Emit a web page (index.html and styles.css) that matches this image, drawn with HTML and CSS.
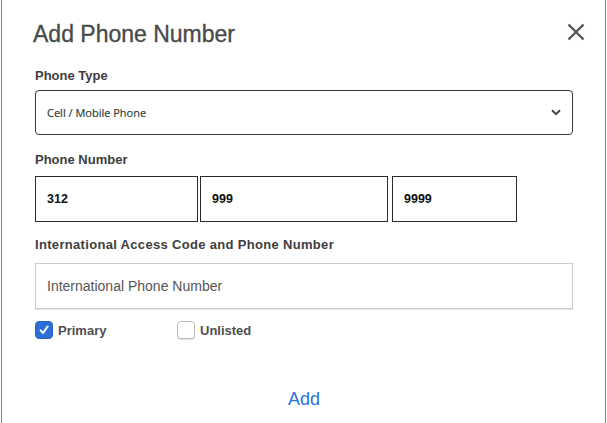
FILE: index.html
```html
<!DOCTYPE html>
<html>
<head>
<meta charset="utf-8">
<link rel="stylesheet" href="styles.css">
</head>
<body>
<div class="modal">
  <div class="header">
    <h1 class="title">Add Phone Number</h1>
    <button class="close" aria-label="Close">
      <svg width="18" height="18" viewBox="0 0 18 18"><path d="M1.5 1.5L16.5 16.5M16.5 1.5L1.5 16.5" stroke="#555" stroke-width="2.4" stroke-linecap="butt" fill="none"/></svg>
    </button>
  </div>

  <div class="label label-type">Phone Type</div>
  <div class="select">
    <span class="select-text">Cell / Mobile Phone</span>
    <svg class="chev" width="10" height="7" viewBox="0 0 10 7"><path d="M1 1.2L5 5.2L9 1.2" stroke="#444" stroke-width="2" fill="none"/></svg>
  </div>

  <div class="label label-number">Phone Number</div>
  <div class="phone-row">
    <div class="field area">312</div>
    <div class="field prefix">999</div>
    <div class="field line">9999</div>
  </div>

  <div class="label label-intl">International Access Code and Phone Number</div>
  <div class="intl">International Phone Number</div>

  <div class="checks">
    <label class="check">
      <span class="box box-on">
        <svg width="12" height="12" viewBox="0 0 12 12"><path d="M2.6 6.4L5 9L9.6 2.6" stroke="#fff" stroke-width="2" fill="none" stroke-linecap="round" stroke-linejoin="round"/></svg>
      </span>
      <span class="check-label">Primary</span>
    </label>
    <label class="check">
      <span class="box box-off"></span>
      <span class="check-label">Unlisted</span>
    </label>
  </div>

  <div class="footer"><a class="add">Add</a></div>
</div>
</body>
</html>
```

FILE: styles.css
```css
html, body {
  margin: 0;
  padding: 0;
  background: #fff;
}
body {
  font-family: "Liberation Sans", Arial, sans-serif;
}
.modal {
  box-sizing: border-box;
  width: 605px;
  height: 423px;
  margin-left: 1px;
  border-left: 1px solid #858585;
  border-right: 1px solid #858585;
  padding: 20px 32px 0 33px;
  background: #fff;
}
.header {
  display: flex;
  justify-content: space-between;
  align-items: flex-start;
}
.title {
  margin: 0 0 0 -2px;
  font-size: 23px;
  line-height: 28px;
  font-weight: normal;
  color: #4a4a4a;
  -webkit-text-stroke: 0.35px #4a4a4a;
}
.close {
  border: 0;
  background: none;
  padding: 0;
  margin: 3px -12px 0 0;
  width: 18px;
  height: 18px;
  display: block;
}
.close svg { display: block; }
.label {
  font-size: 13px;
  line-height: 16px;
  font-weight: bold;
  color: #3e3e3e;
}
.label-type { margin-top: 20px; }
.label-number { margin-top: 17px; }
.label-intl { margin-top: 15px; letter-spacing: 0.32px; }
.select {
  box-sizing: border-box;
  margin-top: 6px;
  height: 45px;
  border: 1px solid #3a3a3a;
  border-radius: 4px;
  display: flex;
  align-items: center;
  justify-content: space-between;
  padding: 0 11px 0 11px;
}
.select-text {
  font-family: "Open Sans", "Noto Sans", sans-serif;
  font-size: 11px;
  color: #1f3a36;
  -webkit-text-stroke: 0.15px #1f3a36;
}
.chev { display: block; margin-top: -1px; }
.phone-row {
  display: flex;
  margin-top: 8px;
}
.field {
  box-sizing: border-box;
  height: 46px;
  border: 1px solid #2a2a2a;
  display: flex;
  align-items: center;
  padding-left: 11px;
  font-size: 12.5px;
  font-weight: bold;
  color: #111;
}
.area { width: 163px; margin-right: 2px; }
.prefix { width: 188px; margin-right: 4px; }
.line { width: 125px; }
.intl {
  box-sizing: border-box;
  margin-top: 10px;
  height: 46px;
  border: 1px solid #cccccc;
  box-shadow: 0 1px 0 #e6e6e6;
  display: flex;
  align-items: center;
  padding-left: 11px;
  font-size: 14px;
  color: #555;
}
.checks {
  display: grid;
  grid-template-columns: 142px auto;
  margin-top: 12px;
}
.check {
  display: flex;
  align-items: center;
}
.box {
  box-sizing: border-box;
  width: 18px;
  height: 18px;
  border-radius: 4px;
  display: flex;
  align-items: center;
  justify-content: center;
}
.box-on {
  background: #2b6fd4;
  border: 1px solid #2a66c4;
}
.box-off {
  background: #fff;
  border: 1px solid #bdbdbd;
  box-shadow: 0 1px 1px rgba(0,0,0,0.12);
}
.check-label {
  margin-left: 5px;
  font-size: 13px;
  font-weight: bold;
  color: #4f4f4f;
}
.footer {
  margin-top: 49px;
  text-align: center;
}
.add {
  font-size: 18px;
  line-height: 22px;
  color: #2a72d6;
  cursor: pointer;
}
```
